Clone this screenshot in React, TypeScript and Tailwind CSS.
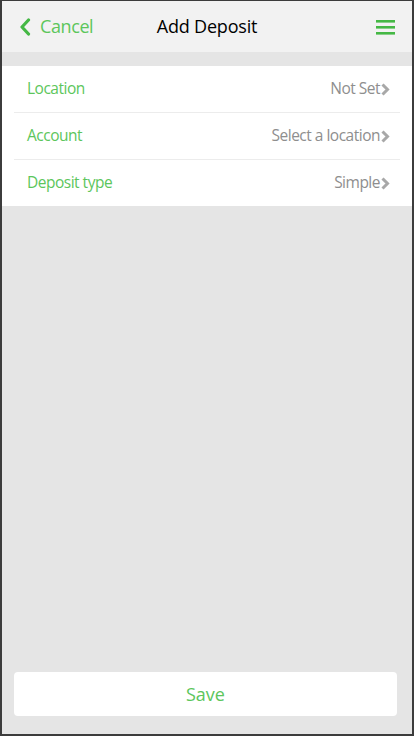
const rows = [
  { label: "Location", value: "Not Set" },
  { label: "Account", value: "Select a location" },
  { label: "Deposit type", value: "Simple" },
];

const Chevron = () => (
  <svg width="9" height="13" viewBox="0 0 9 13" className="ml-[1px]">
    <path d="M1.5 1.5 L6.5 6.5 L1.5 11.5" fill="none" stroke="#a8a8a8" strokeWidth="3" />
  </svg>
);

const App = () => {
  return (
    <div
      className="w-[414px] h-[736px] flex flex-col bg-[#e5e5e5] border-2 border-t border-[#3c3c3c] overflow-hidden"
      style={{ fontFamily: '"Open Sans", "Noto Sans", sans-serif' }}
    >
      {/* header */}
      <div className="h-[51px] shrink-0 bg-[#f2f2f2] flex items-center px-[17px]">
        <div className="flex items-center gap-[9px] w-[120px]">
          <svg width="12" height="18" viewBox="0 0 12 18">
            <path d="M9.5 2 L3 9 L9.5 16" fill="none" stroke="#45b845" strokeWidth="3.2" strokeLinecap="round" strokeLinejoin="round" />
          </svg>
          <span className="text-[18px] text-[#5cc65c] tracking-[-0.4px]">Cancel</span>
        </div>
        <div className="flex-1 text-center text-[18px] text-black tracking-[-0.2px]">Add Deposit</div>
        <div className="w-[120px] flex justify-end">
          <svg width="19" height="16" viewBox="0 0 19 16">
            <rect x="0" y="1" width="19" height="2.6" fill="#45b845" />
            <rect x="0" y="7" width="19" height="2.6" fill="#45b845" />
            <rect x="0" y="13" width="19" height="2.6" fill="#45b845" />
          </svg>
        </div>
      </div>

      {/* form card */}
      <div className="mt-[14px] bg-white flex flex-col">
        {rows.map((r, i) => (
          <div key={r.label}>
            {i > 0 && <div className="mx-[12px] h-px bg-[#ececec]" />}
            <div className="h-[46px] flex items-center justify-between pl-[25px] pr-[22px] text-[15.5px] tracking-[-0.5px]">
              <span className="text-[#5cc65c]">{r.label}</span>
              <span className="flex items-center text-[#8e8e8e]">
                {r.value}
                <Chevron />
              </span>
            </div>
          </div>
        ))}
      </div>

      <div className="flex-1" />

      {/* save */}
      <div className="px-[12px] pb-[18px]">
        <button className="w-[383px] h-[44px] bg-white rounded-[4px] text-[18px] text-[#5cc65c]">
          Save
        </button>
      </div>
    </div>
  );
};

export default App;
